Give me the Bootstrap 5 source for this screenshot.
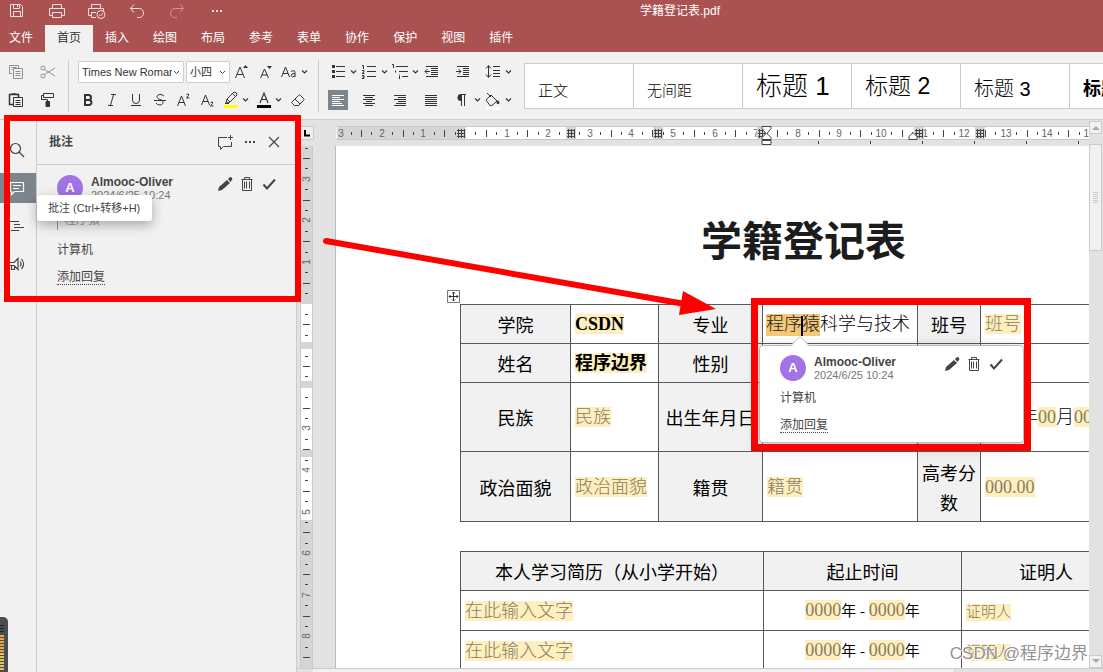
<!DOCTYPE html>
<html lang="zh-CN">
<head>
<meta charset="utf-8">
<meta name="viewport" content="width=device-width, initial-scale=1">
<title>学籍登记表.pdf</title>
<link rel="stylesheet" href="https://cdn.jsdelivr.net/npm/bootstrap@5.3.0/dist/css/bootstrap.min.css">
<style>
:root{--brand:#aa5252;--bar:#f1f1f1;--line:#cbcbcb;--canvas:#e2e2e2;--active:#7d858c;--ink:#444;--mark-red:#f00}
body{font-family:"Liberation Sans","Noto Sans CJK SC",sans-serif;font-size:12px;line-height:16px;color:var(--ink);background:var(--bar)}
svg{display:block;flex:none}
.ic{fill:none;stroke:currentColor}
.plain{border:0;background:none;padding:0;color:inherit;display:flex;align-items:center;justify-content:center}
.app-header{background:var(--brand);color:#fff}
.title-row{height:25px}
.quick{width:257px;gap:20px;padding-left:7px;color:#f3dede}
.quick .plain{width:20px;height:22px;align-self:flex-start}
.doc-title{line-height:22px}
.tabs-row{height:27px;padding-left:9px}
.tabs-row a{color:#fff;padding:0 12px;line-height:26px;text-decoration:none;white-space:nowrap}
.tabs-row a:first-child{padding-left:0}
.tabs-row a.current{background:var(--bar);color:#333}
.ribbon{height:68px;border-bottom:1px solid var(--line);background:var(--bar);color:#333;overflow:hidden}
.tool-group{padding-top:7px;gap:2px;flex:none}
.font-group{padding:7px 7px 0 7px}
.para-group{padding-left:9px}
.tool-line{height:26px;display:flex;align-items:center}
.font-line{padding-left:2px}
.tb{width:24px;height:24px}
.tb-drop{width:33px;gap:2px}
.sep{width:1px;height:52px;background:var(--line);margin-top:8px;flex:none}
.combo{height:22px;border:1px solid #cfcfcf;border-radius:1px;padding:0 11px 0 3px;font-size:11px;line-height:20px;color:#333;background-color:#fff;background-size:7px 5px;background-position:right 3px center;
 background-image:url("data:image/svg+xml,%3Csvg xmlns='http://www.w3.org/2000/svg' viewBox='0 0 7 5'%3E%3Cpath d='M1 1l2.500 2.500L6 1' fill='none' stroke='%23444'/%3E%3C/svg%3E")}
.combo-font{width:106px}
.combo-size{width:44px;margin-left:2px}
.para-line{display:grid;grid-template-columns:repeat(6,31px);align-items:center;height:26px}
.para-line .plain{height:20px;justify-content:flex-start;gap:1px}
.pressed svg{background:var(--active);color:#fff}
.gallery{margin:11px 0 0 10px;height:46px;min-width:0;overflow:hidden}
.gallery button{width:109px;flex:none;border:1px solid var(--line);border-right:0;background:#fff;color:#000;text-align:left;padding:0 13px;line-height:44px;white-space:nowrap;font-weight:300}
.st-body{font-size:15px}.gallery .st-body{line-height:54px}
.st-1{font-size:26px}.st-2{font-size:23px}.st-3{font-size:20px}.st-4{font-size:18px}
.gallery .st-3{line-height:50px}
.gallery .st-4{font-weight:700;line-height:50px}
.rail{width:37px;border-right:1px solid var(--line);padding-top:15px;gap:8px}
.rail button{height:30px;padding-left:9px;justify-content:flex-start}
.rail .current{background:var(--active);color:#fff}
.panel{width:260px;border-right:1px solid var(--line)}
.panel-head{height:45px;padding:0 10px 0 12px;border-bottom:1px solid var(--line)}
.panel-head .plain{width:24px;height:24px}
.note{padding:10px 16px 10px 20px}
.avatar{width:26px;height:26px;border-radius:50%;background:#a173e6;color:#fff;font-weight:700;font-size:13px;line-height:26px;text-align:center;flex:none}
.who{font-weight:700;font-size:12px;line-height:14px}
.when{font-size:11px;line-height:13px;color:#777}
.note-tools .plain{width:22px;height:18px}
.quoted{border-left:1px solid #999;color:#999;padding-left:6px;line-height:20px}
.reply{color:var(--ink);text-decoration:none;border-bottom:1px dotted var(--ink);line-height:14px;display:inline-block}
.hint{left:37px;top:75px;padding:5px 12px 5px 11px;font-size:11px;background:#fff;border-radius:3px;box-shadow:0 4px 12px rgba(0,0,0,.3);white-space:nowrap;z-index:3}
.editor{background:var(--canvas);min-width:0}
.ruler-row{height:26px;padding-top:6px;padding-left:3px}
.corner{width:14px;height:14px;border:1px solid var(--line);background:#eee;margin-right:22px}
.ruler-h{height:20px;flex:1 1 0;min-width:0}
.ruler-v{width:13px;height:100%;margin:0 22px 0 3px}
.paper{background:#fff;border-left:1px solid #bbb;flex:1 1 0;min-width:0}
.sheet{padding:66px 0 0 124px;width:811px;color:#000;font-family:"Liberation Serif","Noto Sans CJK SC",serif;font-size:18px;line-height:30px}
.sheet h1{font-size:41px;line-height:60px;font-weight:700;margin:0 0 32px;text-align:center;color:#1c1c1c}
.form-grid{width:671px;table-layout:fixed;border-collapse:collapse;margin-bottom:29px}
.form-grid td,.form-grid th{border:1px solid #595959;padding:0 4px;vertical-align:middle}
.form-grid th{background:#f1f1f1;font-weight:400;text-align:center;padding:0 2px;font-family:"Noto Sans CJK SC",sans-serif}
.r-s{height:39px}.r-m{height:40px}.r-l{height:69px}.r-x{height:70px}
.w1{width:110px}.w2{width:88px}.w3{width:104px}.w4{width:155px}.w5{width:63px}.w6{width:303px}.w7{width:198px}
.field{background:#ffefbf;color:#877d62;display:inline-block;line-height:20px;font-weight:300}
.field.filled{color:#000;font-weight:700}
.field.picked{background:#f3c877;color:#222}
.field.short{font-size:15px;line-height:17px}
.form-grid td.thin{font-weight:300;white-space:nowrap;padding-left:3px}
.caret{display:inline-block;width:2px;height:20px;background:#000;margin:0 -1px;vertical-align:middle;position:relative}
.period{text-align:center;font-family:"Liberation Serif","Noto Sans CJK SC",sans-serif;font-size:15px}
.period .field{font-size:18px}
.grip{left:111px;top:144px;z-index:1}
.bubble{left:423px;top:199px;width:265px;height:98px;background:#fff;border:1px solid #bbb;border-radius:4px;box-shadow:0 4px 14px rgba(0,0,0,.25);padding:9px 16px 0 20px;z-index:2}
.bubble-tip{left:30px;top:-10px}
.frame-a{left:4px;top:-5px;width:297px;height:187px;border:6px solid var(--mark-red);z-index:4;pointer-events:none}
.frame-b{left:415px;top:152px;width:280px;height:153px;border:7px solid var(--mark-red);z-index:4;pointer-events:none}
.arrow{left:320px;top:110px;z-index:5;pointer-events:none}
.vscroll{width:14px;padding-top:1px}
.vscroll button{width:13px;height:13px;border:1px solid var(--line);background:var(--bar)}
.vthumb{width:13px;height:107px;border:1px solid var(--line);background:var(--bar);margin-top:10px}
.hscroll{height:4px;border-top:1px solid var(--line);padding-left:16px}
.hthumb{flex:0 1 642px;background:var(--bar);border-right:1px solid var(--line)}
.stamp{right:15px;bottom:6px;font-size:17px;line-height:24px;color:rgba(125,125,125,.85);text-shadow:1px 1px 1px #fff,-1px -1px 1px #fff;z-index:6;pointer-events:none}
.gadget{left:0;bottom:0;z-index:6}
.tick{stroke:#444}.num{fill:#666;font-size:10px;text-anchor:middle}
</style>
</head>
<body class="vh-100 overflow-hidden d-flex flex-column">
<svg class="d-none">
 <symbol id="chev" viewBox="0 0 9 6"><path d="M2 1.500L4.500 4 7 1.500" fill="none" stroke="currentColor" stroke-width="1.200"/></symbol>
 <symbol id="pencil" viewBox="0 0 16 16"><path d="M1 15l1-4 8-7 3 3-8 7zM11 3l1.500-1.500q1.500-1 2.500.5t-.5 2.500L13.500 6z" fill="currentColor"/></symbol>
 <symbol id="trash" viewBox="0 0 16 16"><path d="M2.500 3.500h11M5.500 3V1.500h5V3M3.500 3.500v11h9v-11M5.500 5.500v7M7.500 5.500v7M10.500 5.500v7" fill="none" stroke="currentColor"/></symbol>
 <symbol id="check" viewBox="0 0 16 16"><path d="M2.500 8.500l3.500 4 8-9" fill="none" stroke="currentColor" stroke-width="2"/></symbol>
</svg>

<header class="app-header">
 <div class="title-row d-flex">
  <div class="quick d-flex flex-shrink-0">
   <button class="plain" aria-label="保存"><svg class="ic" width="16" height="16"><path d="M1.500 1.500h10l2 2v10h-12zM4.500 1.500v4h6v-4M8.500 2v2M4.500 13.500v-5h7v5"/></svg></button>
   <button class="plain" aria-label="打印"><svg class="ic" width="18" height="16"><path d="M4.500 6V1.500h9V6M4.500 12.500h-3v-7h15v7h-3M4.500 9.500h9v5h-9z"/></svg></button>
   <button class="plain" aria-label="快速打印"><svg class="ic" width="20" height="16"><path d="M4.500 6V1.500h9V6M4.500 12.500h-3v-7h15v3M9 14.500H4.500v-5H9"/><circle cx="14" cy="11.500" r="4"/><path d="M12 11.500l1.500 1.500 2.500-3"/></svg></button>
   <button class="plain" aria-label="撤消"><svg class="ic" width="16" height="16"><path d="M5 1.500l-3.500 4 3.500 4M2 5.500h8.500a4 4.500 0 010 9H8"/></svg></button>
   <button class="plain opacity-50" aria-label="重做"><svg class="ic" width="16" height="16"><path d="M11 1.500l3.500 4-3.500 4M14 5.500H5.500a4 4.500 0 000 9H8"/></svg></button>
   <button class="plain" aria-label="更多"><svg width="12" height="4" fill="currentColor"><path d="M1 1h2v2H1zM5 1h2v2H5zM9 1h2v2H9z"/></svg></button>
  </div>
  <div class="doc-title flex-fill text-center">学籍登记表.pdf</div>
 </div>
 <nav class="tabs-row d-flex">
  <a href="#">文件</a><a href="#" class="current">首页</a><a href="#">插入</a><a href="#">绘图</a><a href="#">布局</a><a href="#">参考</a><a href="#">表单</a><a href="#">协作</a><a href="#">保护</a><a href="#">视图</a><a href="#">插件</a>
 </nav>
</header>

<div class="ribbon d-flex flex-shrink-0">
 <div class="tool-group d-flex flex-column ps-1 pe-2">
  <div class="tool-line gap-2 opacity-50">
   <button class="plain tb" aria-label="复制"><svg class="ic" width="16" height="16"><path d="M4 9.500H1.500v-8h9V4M3.500 3.500h5M3.500 5.500h1M5.500 4.500h9v10h-9zM7.500 7.500h5M7.500 9.500h5M7.500 11.500h5"/></svg></button>
   <button class="plain tb" aria-label="剪切"><svg class="ic" width="16" height="16"><circle cx="3" cy="4" r="2"/><circle cx="3" cy="12" r="2"/><path d="M4.500 5.500L15 12M4.500 10.500L15 4"/></svg></button>
  </div>
  <div class="tool-line gap-2">
   <button class="plain tb" aria-label="粘贴"><svg class="ic" width="16" height="16"><path d="M5 12.500H1.500v-10h9V5M3.500 2h5" stroke-width="1.500"/><path d="M5.500 5.500h9v9h-9zM7.500 8.500h5M7.500 10.500h5M7.500 12.500h5"/></svg></button>
   <button class="plain tb" aria-label="格式刷"><svg class="ic" width="16" height="16"><path d="M3.500 1.500h10v4h-10zM3.500 3.500h-2v4h6v2"/><path d="M6 9.500h3.500v5H6z" fill="currentColor"/></svg></button>
  </div>
 </div>
 <div class="sep"></div>
 <div class="tool-group font-group d-flex flex-column">
  <div class="tool-line font-line">
   <select class="form-select combo combo-font" aria-label="字体"><option>Times New Roman</option></select>
   <select class="form-select combo combo-size" aria-label="字号"><option>小四</option></select>
   <button class="plain tb" aria-label="增大字号"><svg width="16" height="16"><path class="ic" d="M1.500 14L6 3l4.500 11M3 10.500h6"/><path d="M9 4l2.500-3L14 4z" fill="currentColor"/></svg></button>
   <button class="plain tb" aria-label="减小字号"><svg width="16" height="16"><path class="ic" d="M2.500 14L6.500 5l4 9M4 11h5"/><path d="M9 2l2.500 3L14 2z" fill="currentColor"/></svg></button>
   <button class="plain tb tb-drop" aria-label="更改大小写"><svg class="ic" width="18" height="16"><path d="M1.500 13L5.500 3l4 10M3 9.500h5M11 7.500q4-2 4 1V13M15 9.500q-4 0-4 2 1 2.500 4 .5"/></svg><svg width="9" height="6"><use href="#chev"/></svg></button>
  </div>
  <div class="tool-line">
   <button class="plain tb" aria-label="加粗"><svg class="ic" width="14" height="16" stroke-width="2"><path d="M4 3h3.500a2.500 2.500 0 010 5H4zM4 8h4a2.500 2.500 0 010 5H4z"/></svg></button>
   <button class="plain tb" aria-label="倾斜"><svg class="ic" width="14" height="16"><path d="M6 2.500h5M3 13.500h5M8.500 3l-3 10"/></svg></button>
   <button class="plain tb" aria-label="下划线"><svg class="ic" width="14" height="16"><path d="M3.500 2v6a3.500 3.500 0 007 0V2M2 13.500h10"/></svg></button>
   <button class="plain tb" aria-label="删除线"><svg class="ic" width="14" height="16"><path d="M11 4Q9.500 2.500 7 2.500c-4 0-4 4 0 5s4 5 0 5.500q-3 0-4-2M1 8.500h12"/></svg></button>
   <button class="plain tb" aria-label="上标"><svg class="ic" width="16" height="16"><path d="M1.500 14L5.500 4l4 10M3 10.500h5M10.500 2.500q3-1.500 2 1l-2 2.500h3"/></svg></button>
   <button class="plain tb" aria-label="下标"><svg class="ic" width="16" height="16"><path d="M1.500 13L5.500 3l4 10M3 9.500h5M10.500 10.500q3-1.500 2 1l-2 2.500h3"/></svg></button>
   <button class="plain tb tb-drop" aria-label="突出显示颜色"><svg width="16" height="18"><path class="ic" d="M3 12l1-4 7-7q3 0 3 3l-7 7zM4 8l3 3M9.500 2.500l3 3M2 12.500h4"/><path d="M1 14h14v3H1z" fill="#ff0"/></svg><svg width="9" height="6"><use href="#chev"/></svg></button>
   <button class="plain tb tb-drop" aria-label="字体颜色"><svg width="16" height="18"><path class="ic" d="M4 12L8 2l4 10M5.500 8.500h5" stroke-width="1.200"/><path d="M1 14h14v3H1z" fill="#000"/></svg><svg width="9" height="6"><use href="#chev"/></svg></button>
   <button class="plain tb" aria-label="清除格式"><svg class="ic" width="16" height="16"><path d="M1.500 10.500l7-7q1-1 2 0l3 3q1 1 0 2l-5 5h-4zM5 7l5 5"/></svg></button>
  </div>
 </div>
 <div class="sep"></div>
 <div class="tool-group para-group d-flex flex-column">
  <div class="para-line">
   <button class="plain" aria-label="项目符号"><svg width="20" height="20"><path class="ic" d="M8 4.500h9M8 9.500h9M8 14.500h9"/><path d="M4 3h3v3H4zM4 8h3v3H4zM4 13h3v3H4z" fill="currentColor"/></svg><svg width="9" height="6"><use href="#chev"/></svg></button>
   <button class="plain" aria-label="编号"><svg class="ic" width="20" height="20"><path d="M8 4.500h9M8 9.500h9M8 14.500h9M3 3.500h1.500V7M3 8.500h2v1.500L3 11.500h2.500M3 13.500h2v3H3M3.500 15H5"/></svg><svg width="9" height="6"><use href="#chev"/></svg></button>
   <button class="plain" aria-label="多级列表"><svg class="ic" width="20" height="20"><path d="M6 4.500h12M9 9.500h9M12 14.500h6M2 2.500h1.500V6M5.500 8.500v2M9.500 12.500v1M9.500 14v3"/></svg><svg width="9" height="6"><use href="#chev"/></svg></button>
   <button class="plain" aria-label="减少缩进"><svg class="ic" width="20" height="20"><path d="M5 4.500h12M10 6.500h7M10 8.500h7M10 10.500h7M10 12.500h7M5 14.500h12M4 9.500h5M6.500 7L4 9.500 6.500 12"/></svg></button>
   <button class="plain" aria-label="增加缩进"><svg class="ic" width="20" height="20"><path d="M5 4.500h12M11 6.500h6M11 8.500h6M11 10.500h6M11 12.500h6M5 14.500h12M4 9.500h5M6.500 7L9 9.500 6.500 12"/></svg></button>
   <button class="plain" aria-label="行距"><svg class="ic" width="20" height="20"><path d="M10 4.500h7M10 8.500h7M10 11.500h7M10 14.500h7M5.500 4v11M3 6.500l2.500-3L8 6.500M3 12.500l2.500 3 2.500-3"/></svg><svg width="9" height="6"><use href="#chev"/></svg></button>
  </div>
  <div class="para-line">
   <button class="plain pressed" aria-label="左对齐"><svg class="ic" width="20" height="20"><path d="M4 5.500h12M4 7.500h8M4 9.500h12M4 11.500h8M4 13.500h10M4 15.500h12"/></svg></button>
   <button class="plain" aria-label="居中"><svg class="ic" width="20" height="20"><path d="M4 5.500h12M6 7.500h8M4 9.500h12M7 11.500h6M4 13.500h12M6 15.500h8"/></svg></button>
   <button class="plain" aria-label="右对齐"><svg class="ic" width="20" height="20"><path d="M4 5.500h12M8 7.500h8M4 9.500h12M8 11.500h8M6 13.500h10M4 15.500h12"/></svg></button>
   <button class="plain" aria-label="两端对齐"><svg class="ic" width="20" height="20"><path d="M4 5.500h12M4 7.500h12M4 9.500h12M4 11.500h12M4 13.500h12M4 15.500h12"/></svg></button>
   <button class="plain" aria-label="非打印字符"><svg width="20" height="20"><path d="M9 4a3.500 3.500 0 000 7z" fill="currentColor"/><path class="ic" d="M8 4.500h6M9.500 4v12M12.500 4v12"/></svg><svg width="9" height="6"><use href="#chev"/></svg></button>
   <button class="plain" aria-label="底纹"><svg width="20" height="20"><path class="ic" d="M4 3l4 4M3 10l5-5 6 6-5 4.500H7z"/><path d="M15 10q-3 4 0 4t0-4z" fill="currentColor"/><path d="M3 17h14v3H3z" fill="#fff"/></svg><svg width="9" height="6"><use href="#chev"/></svg></button>
  </div>
 </div>
 <div class="gallery d-flex flex-fill">
  <button class="st-body">正文</button><button class="st-body">无间距</button><button class="st-1">标题 1</button><button class="st-2">标题 2</button><button class="st-3">标题 3</button><button class="st-4">标题 4</button>
 </div>
</div>

<main class="d-flex flex-fill position-relative" style="min-height:0">
 <nav class="rail d-flex flex-column flex-shrink-0">
  <button class="plain" aria-label="查找"><svg class="ic" width="16" height="16" stroke-width="1.200"><circle cx="6.500" cy="6.500" r="5"/><path d="M10 10l5 5"/></svg></button>
  <button class="plain current" aria-label="批注"><svg class="ic" width="16" height="16" stroke-width="1.200"><path d="M1.500 2.500h13v9h-9l-3 3v-3h-1zM4 5.500h8M4 8.500h6"/></svg></button>
  <button class="plain" aria-label="导航"><svg class="ic" width="16" height="16"><path d="M1 3.500h9M5 6.500h6M5 9.500h10M2 12.500h8"/></svg></button>
  <button class="plain" aria-label="反馈"><svg class="ic" width="16" height="16" stroke-width="1.200"><path d="M1 6.500h4l4-4v11l-4-4H1M2.500 9.500v4h3v-3M11 5.500q2 2.500 0 5M12.500 3q4 5 0 10"/></svg></button>
 </nav>
 <aside class="panel flex-shrink-0">
  <div class="panel-head d-flex align-items-center">
   <strong class="flex-fill">批注</strong>
   <button class="plain" aria-label="添加批注"><svg class="ic" width="16" height="16"><path d="M9 3.500H.500v9h2v3l3-3h8V8M12.500 1v5M10 3.500h5"/></svg></button>
   <button class="plain" aria-label="更多"><svg width="12" height="4" fill="currentColor"><path d="M1 1h2v2H1zM5 1h2v2H5zM9 1h2v2H9z"/></svg></button>
   <button class="plain" aria-label="关闭"><svg class="ic" width="12" height="12" stroke-width="1.200"><path d="M1 1l10 10M11 1L1 11"/></svg></button>
  </div>
  <div class="note">
   <div class="d-flex">
    <div class="avatar">A</div>
    <div class="flex-fill ps-2"><div class="who">Almooc-Oliver</div><div class="when">2024/6/25 10:24</div></div>
    <div class="note-tools d-flex"><button class="plain" aria-label="编辑"><svg width="16" height="16"><use href="#pencil"/></svg></button><button class="plain" aria-label="删除"><svg width="16" height="16"><use href="#trash"/></svg></button><button class="plain" aria-label="解决"><svg width="16" height="16"><use href="#check"/></svg></button></div>
   </div>
   <div class="quoted mt-2">程序猿</div>
   <div class="mt-2 pt-1">计算机</div>
   <a href="#" class="reply mt-2 pt-1">添加回复</a>
  </div>
 </aside>
 <section class="editor flex-fill d-flex flex-column">
  <div class="d-flex flex-fill" style="min-height:0">
   <div class="flex-fill d-flex flex-column" style="min-width:0">
    <div class="ruler-row d-flex flex-shrink-0"><div class="corner flex-shrink-0"><svg width="12" height="12"><path d="M4 3v5.500h5" fill="none" stroke="#000" stroke-width="2"/></svg></div><svg class="ruler-h" id="rulerH"></svg></div>
    <div class="d-flex flex-fill" style="min-height:0">
     <svg class="ruler-v" id="rulerV"></svg>
     <div class="paper position-relative overflow-hidden">
      <article class="sheet">
       <h1>学籍登记表</h1>
       <table class="form-grid">
        <colgroup><col class="w1"><col class="w2"><col class="w3"><col class="w4"><col class="w5"><col></colgroup>
        <tr class="r-s"><th>学院</th><td><span class="field filled">CSDN</span></td><th>专业</th><td class="thin"><span class="field picked">程序<i class="caret"></i>猿</span>科学与技术</td><th>班号</th><td><span class="field">班号</span></td></tr>
        <tr class="r-s"><th>姓名</th><td><span class="field filled">程序边界</span></td><th>性别</th><td></td><th></th><td></td></tr>
        <tr class="r-l"><th>民族</th><td><span class="field">民族</span></td><th>出生年月日</th><td></td><th></th><td class="thin"><span class="field">0000</span>年<span class="field">00</span>月<span class="field">00</span>日</td></tr>
        <tr class="r-x"><th>政治面貌</th><td><span class="field">政治面貌</span></td><th>籍贯</th><td><span class="field">籍贯</span></td><th>高考分数</th><td><span class="field">000.00</span></td></tr>
       </table>
       <table class="form-grid">
        <colgroup><col class="w6"><col class="w7"><col></colgroup>
        <tr class="r-s"><th>本人学习简历（从小学开始）</th><th>起止时间</th><th>证明人</th></tr>
        <tr class="r-m"><td><span class="field">在此输入文字</span></td><td class="period"><span class="field">0000</span>年 - <span class="field">0000</span>年</td><td><span class="field short">证明人</span></td></tr>
        <tr class="r-m"><td><span class="field">在此输入文字</span></td><td class="period"><span class="field">0000</span>年 - <span class="field">0000</span>年</td><td><span class="field short">证明人</span></td></tr>
       </table>
      </article>
      <svg class="grip position-absolute" width="13" height="13"><path d="M.5.5h12v12H.5z" fill="#fff" stroke="#777"/><path d="M6.500 2v9M2 6.500h9M5 3.500L6.500 2 8 3.500M5 9.500L6.500 11 8 9.500M3.500 5L2 6.500 3.500 8M9.500 5L11 6.500 9.500 8" fill="none" stroke="#333"/></svg>
      <div class="bubble position-absolute">
       <svg class="bubble-tip position-absolute" width="20" height="11"><path d="M0 10.500L10 .5l10 10" fill="#fff" stroke="#bbb"/></svg>
       <div class="d-flex">
        <div class="avatar">A</div>
        <div class="flex-fill ps-2"><div class="who">Almooc-Oliver</div><div class="when">2024/6/25 10:24</div></div>
        <div class="note-tools d-flex"><button class="plain" aria-label="编辑"><svg width="16" height="16"><use href="#pencil"/></svg></button><button class="plain" aria-label="删除"><svg width="16" height="16"><use href="#trash"/></svg></button><button class="plain" aria-label="解决"><svg width="16" height="16"><use href="#check"/></svg></button></div>
       </div>
       <div class="mt-2">计算机</div>
       <a href="#" class="reply mt-2 pt-1">添加回复</a>
      </div>
      <div class="frame-b position-absolute"></div>
     </div>
    </div>
   </div>
   <div class="vscroll flex-shrink-0 d-flex flex-column">
    <button class="plain" aria-label="向上滚动"><svg width="8" height="5"><path d="M0 5l4-4 4 4z" fill="#aaa"/></svg></button>
    <div class="vthumb d-flex align-items-center justify-content-center"><svg class="ic" width="5" height="14" color="#ccc"><path d="M0 1.500h5M0 3.500h5M0 5.500h5M0 7.500h5M0 9.500h5M0 11.500h5"/></svg></div>
    <button class="plain mt-auto" aria-label="向下滚动"><svg width="8" height="5"><path d="M0 0h8L4 4z" fill="#aaa"/></svg></button>
   </div>
  </div>
  <div class="hscroll d-flex flex-shrink-0"><div class="hthumb"></div></div>
 </section>
 <div class="hint position-absolute">批注 (Ctrl+转移+H)</div>
 <div class="frame-a position-absolute"></div>
 <svg class="arrow position-absolute" width="400" height="90"><path d="M6 11L365 74" stroke="#f00" stroke-width="6" stroke-linecap="round"/><path d="M363 61l33 18-37 6z" fill="#f00"/></svg>
 <svg class="gadget position-absolute" width="8" height="55"><path d="M0 0h4q4 1 4 5v50H0z" fill="#4a4d52"/><path d="M0 8.500h4M0 11.500h4M0 14.500h4" stroke="#222"/><path d="M2 18v17" stroke="#e8a848" stroke-width="4" stroke-dasharray="2 1"/><path d="M2 36v17" stroke="#e3c452" stroke-width="4" stroke-dasharray="2 1"/></svg>
 <div class="stamp position-absolute">CSDN @程序边界</div>
</main>
<script src="https://cdn.jsdelivr.net/npm/bootstrap@5.3.0/dist/js/bootstrap.bundle.min.js"></script>
<script>
// Rulers: one unit is one centimetre at the current zoom.
const UNIT = 41.6;
const hatch = (x, y) => `<rect x="${x-5}" y="${y}" width="10" height="12" fill="#d5d5d5"/><path d="M${x-4} ${y+3.5}h8M${x-4} ${y+6.5}h8M${x-4} ${y+9.5}h8M${x-2.5} ${y+2}v9M${x+.5} ${y+2}v9M${x+3.5} ${y+2}v9" stroke="#444" fill="none"/>`;
function marks(origin, from, to, vertical, skip = []) {
  let s = '';
  for (let q = from * 4; q <= to * 4; q++) {
    const p = Math.round(origin + q * UNIT / 4), k = ((q % 4) + 4) % 4;
    if (k === 0) {
      if (q && !skip.includes(q / 4)) s += vertical
        ? `<text class="num" transform="translate(10 ${p}) rotate(-90)">${Math.abs(q / 4)}</text>`
        : `<text class="num" x="${p}" y="11">${Math.abs(q / 4)}</text>`;
    } else {
      const a = k === 2 ? 4 : 6, b = k === 2 ? 10 : 8, c = p + .5;
      s += vertical ? `<path class="tick" d="M${a-1} ${c}H${b}"/>` : `<path class="tick" d="M${c} ${a}V${b+1}"/>`;
    }
  }
  return s;
}
let h = '<rect width="100%" height="14" fill="#c8c8c8"/><rect y="1" width="100%" height="12" fill="#fff"/><rect x="1" y="1" width="129" height="12" fill="#d5d5d5"/>';
h += marks(129, -3, 30, false).replace('x="4"', 'x="5"');
for (const x of [125, 235, 322, 426, 583, 644]) h += hatch(x, 1);
for (let x = 482; x < 2000; x += 52) h += `<path class="tick" d="M${x+.5} 15v3"/>`;
h += '<g fill="#fff" stroke="#444"><path d="M426 .5h9v2l-4 5 4 4v2h-9v-2l4-4-4-5z"/><path d="M426 14.500h9v4h-9zM573 13.500v-3l4-4 4 4v3z"/></g>';
document.getElementById('rulerH').innerHTML = h;
let v = '<rect width="13" height="100%" fill="#c8c8c8"/><rect x="1" width="11" height="100%" fill="#d5d5d5"/>';
for (const [a, b] of [[158, 196], [203, 235], [242, 304], [311, 374]]) v += `<rect x="1" y="${a}" width="11" height="${b-a}" fill="#fff"/>`;
v += marks(157.5, -4, 30, true, [-4, 1, 2]);
document.getElementById('rulerV').innerHTML = v;
</script>
</body>
</html>
